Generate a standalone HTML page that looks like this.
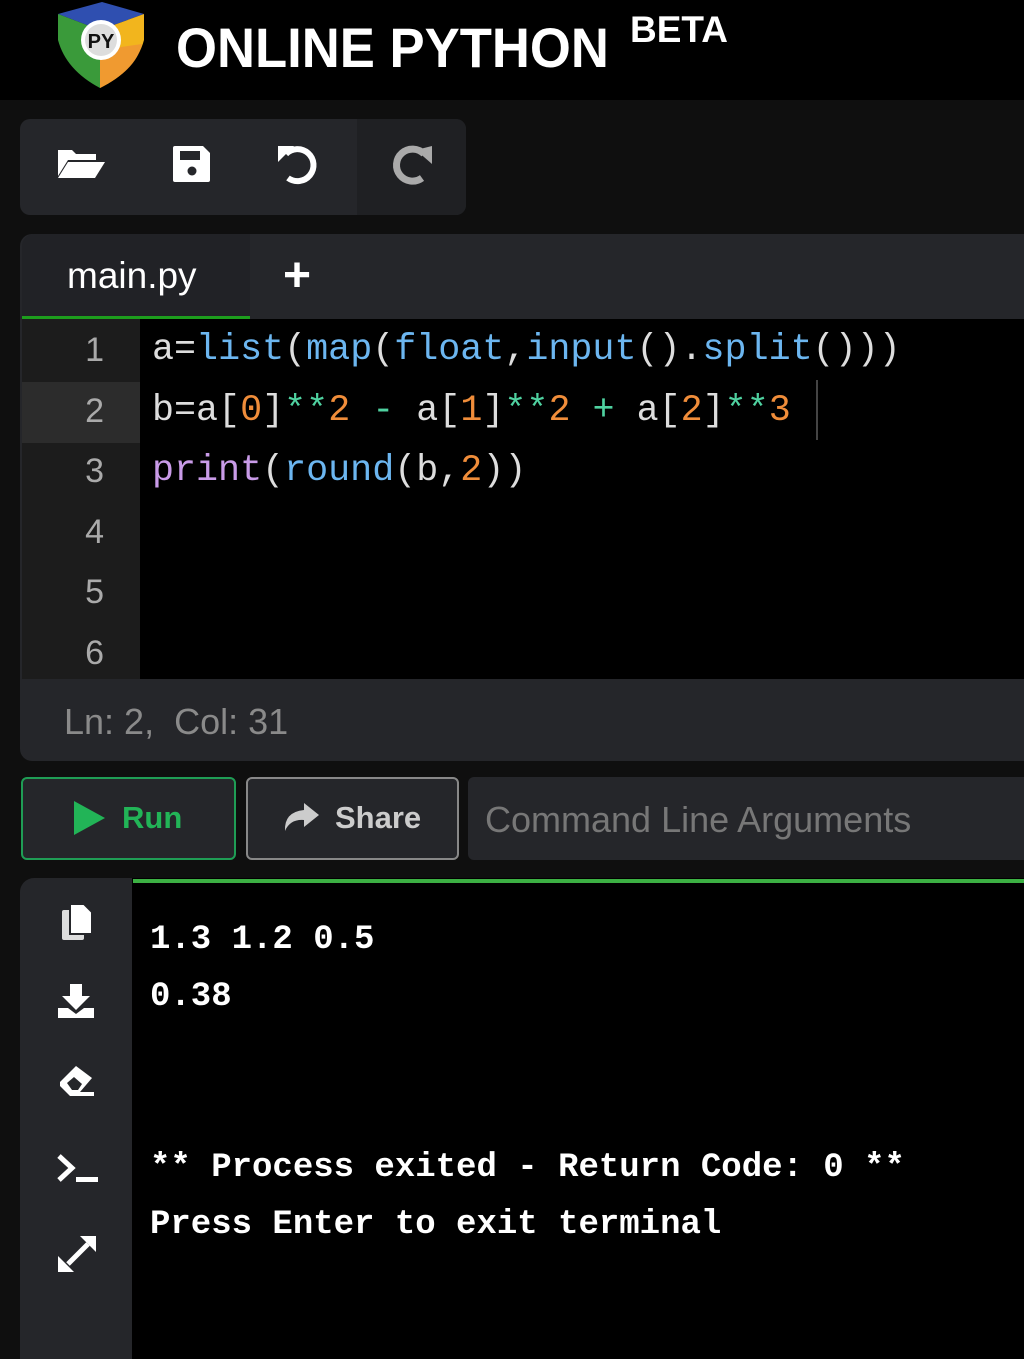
<!DOCTYPE html>
<html><head><meta charset="utf-8"><style>
*{margin:0;padding:0;box-sizing:border-box}
body{width:1024px;height:1359px;background:#0f0f0f;position:relative;overflow:hidden;font-family:"Liberation Sans",sans-serif;color:#fff}
.abs{position:absolute}
.mono{font-family:"Liberation Mono","DejaVu Sans Mono",monospace}
</style></head><body>
<div class="abs" style="left:0;top:0;width:1024px;height:100px;background:#000"></div>
<svg class="abs" style="left:54px;top:0" width="96" height="92" viewBox="0 0 96 92">
<path d="M48 2 L90 14 L46 30 L4 14 Z" fill="#2f4fb0"/>
<path d="M4 14 L46 30 L46 88 Q12 70 4 40 Z" fill="#3a9a3a"/>
<path d="M90 14 L46 30 L46 88 Q82 70 90 40 Z" fill="#f2b51d"/>
<path d="M46 50 L46 88 Q82 70 88 44 Z" fill="#f09a30"/>
<circle cx="47" cy="40" r="20" fill="#fff"/>
<circle cx="47" cy="40" r="16" fill="#ddd"/>
<text x="47" y="48" font-family="Liberation Sans" font-weight="bold" font-size="20" text-anchor="middle" fill="#111">PY</text>
</svg>
<div class="abs" style="left:176px;top:18px;font-size:56px;font-weight:bold;transform:scaleX(0.94);transform-origin:left;line-height:60px">ONLINE PYTHON</div>
<div class="abs" style="left:630px;top:8px;font-size:37px;font-weight:bold;line-height:44px">BETA</div>

<div class="abs" style="left:20px;top:119px;width:446px;height:96px;background:#25262a;border-radius:10px;overflow:hidden">
<div class="abs" style="left:337px;top:0;width:109px;height:96px;background:#1f2023"></div>
</div>
<svg class="abs" style="left:56px;top:146px" width="50" height="34" viewBox="0 0 50 34"><path d="M2 4 h14 l4 4 h20 v6 H12 L2 30 Z" fill="#fff"/><path d="M12 16 H49 L39 32 H2 Z" fill="#fff"/></svg>
<svg class="abs" style="left:172px;top:145px" width="40" height="38" viewBox="0 0 40 38"><path d="M3 1 h28 l7 7 v27 a2 2 0 0 1 -2 2 H3 a2 2 0 0 1 -2 -2 V3 a2 2 0 0 1 2 -2z" fill="#fff"/><rect x="8" y="6" width="20" height="9" fill="#25262a"/><circle cx="20" cy="26" r="4.5" fill="#25262a"/></svg>
<svg class="abs" style="left:276px;top:142px" width="46" height="44" viewBox="0 0 46 44"><path d="M10 12 A16 16 0 1 1 12 36" fill="none" stroke="#fff" stroke-width="6"/><path d="M2 4 L18 4 L2 20 Z" fill="#fff"/></svg>
<svg class="abs" style="left:388px;top:142px" width="46" height="44" viewBox="0 0 46 44"><path d="M36 12 A16 16 0 1 0 34 36" fill="none" stroke="#aaa" stroke-width="7"/><path d="M44 4 L44 22 L28 8 Z" fill="#aaa"/></svg>

<div class="abs" style="left:20px;top:234px;width:1010px;height:527px;background:#25262a;border-radius:12px 0 0 12px"></div>
<div class="abs" style="left:22px;top:234px;width:228px;height:84px;background:#212226;border-radius:12px 0 0 0"></div>
<div class="abs" style="left:67px;top:254px;font-family:'Liberation Sans';font-size:37px;line-height:44px">main.py</div>
<div class="abs" style="left:283px;top:248px;font-size:48px;font-weight:bold;line-height:56px">+</div>
<div class="abs" style="left:22px;top:316px;width:228px;height:3px;background:#1d9e1d"></div>
<div class="abs" style="left:22px;top:319px;width:1002px;height:360px;background:#000"></div>
<div class="abs" style="left:22px;top:319px;width:118px;height:360px;background:#1c1c1c"></div>
<div class="abs" style="left:22px;top:382px;width:118px;height:61px;background:#2c2c2c"></div>
<div class="abs" style="left:816px;top:380px;width:2px;height:60px;background:#444"></div>
<div class="abs" style="left:22px;top:320px;width:82px;text-align:right;font-size:34px;line-height:60.5px;color:#aaa">1<br>2<br>3<br>4<br>5<br>6</div>
<div class="abs mono" style="left:152px;top:320px;font-size:36.7px;line-height:60.5px;white-space:pre;color:#ddd">a=<span style="color:#6cb6f0">list</span>(<span style="color:#6cb6f0">map</span>(<span style="color:#6cb6f0">float</span>,<span style="color:#6cb6f0">input</span>().<span style="color:#6cb6f0">split</span>()))
b=a[<span style="color:#f08d3a">0</span>]<span style="color:#4fd1a0">**</span><span style="color:#f08d3a">2</span> <span style="color:#4fd1a0">-</span> a[<span style="color:#f08d3a">1</span>]<span style="color:#4fd1a0">**</span><span style="color:#f08d3a">2</span> <span style="color:#4fd1a0">+</span> a[<span style="color:#f08d3a">2</span>]<span style="color:#4fd1a0">**</span><span style="color:#f08d3a">3</span>
<span style="color:#c99be8">print</span>(<span style="color:#6cb6f0">round</span>(b,<span style="color:#f08d3a">2</span>))</div>
<div class="abs" style="left:64px;top:700px;font-size:36px;line-height:44px;color:#8a8a8a">Ln: 2,&nbsp; Col: 31</div>

<div class="abs" style="left:21px;top:777px;width:215px;height:83px;border:2px solid #1f9d55;border-radius:6px;background:#25262a"></div>
<svg class="abs" style="left:72px;top:800px" width="34" height="36" viewBox="0 0 34 36"><path d="M2 1 L33 18 L2 35 Z" fill="#22b457"/></svg>
<div class="abs" style="left:122px;top:796px;font-size:31px;font-weight:bold;color:#22b457;line-height:44px">Run</div>
<div class="abs" style="left:246px;top:777px;width:213px;height:83px;border:2px solid #888;border-radius:6px;background:#25262a"></div>
<svg class="abs" style="left:282px;top:802px" width="38" height="30" viewBox="0 0 38 30"><path d="M22 1 L37 13 L22 25 V18 Q8 17 3 29 Q2 10 22 8 Z" fill="#ccc"/></svg>
<div class="abs" style="left:335px;top:796px;font-size:31px;font-weight:bold;color:#ccc;line-height:44px">Share</div>
<div class="abs" style="left:468px;top:777px;width:560px;height:83px;background:#25262a;border-radius:6px 0 0 6px"></div>
<div class="abs" style="left:485px;top:798px;font-size:36px;color:#777;line-height:44px">Command Line Arguments</div>

<div class="abs" style="left:20px;top:878px;width:112px;height:481px;background:#25262a;border-radius:14px 0 0 0"></div>
<div class="abs" style="left:132px;top:878px;width:892px;height:481px;background:#000"></div>
<div class="abs" style="left:133px;top:879px;width:891px;height:4px;background:#3cb043"></div>
<svg class="abs" style="left:60px;top:902px" width="36" height="40" viewBox="0 0 36 40"><rect x="2" y="8" width="22" height="30" rx="2" fill="#ddd"/><path d="M10 2 h14 l8 8 v22 H10 Z" fill="#fff" stroke="#25262a" stroke-width="2"/></svg>
<svg class="abs" style="left:56px;top:982px" width="40" height="38" viewBox="0 0 40 38"><path d="M14 2 h12 v12 h8 L20 28 L6 14 h8 Z" fill="#fff"/><path d="M2 26 h10 l8 6 l8 -6 h10 v10 H2 Z" fill="#fff"/></svg>
<svg class="abs" style="left:56px;top:1064px" width="40" height="34" viewBox="0 0 40 34"><path d="M4 18 L20 2 L36 14 L24 28 H38 V32 H14 L4 22 Z" fill="#fff"/><path d="M11 19 L18 13 L26 20 L22 26 H16 Z" fill="#25262a"/></svg>
<svg class="abs" style="left:56px;top:1152px" width="48" height="36" viewBox="0 0 48 36"><path d="M3 4 L16 16 L3 28" fill="none" stroke="#fff" stroke-width="5"/><rect x="20" y="25" width="22" height="5" fill="#fff"/></svg>
<svg class="abs" style="left:56px;top:1232px" width="44" height="44" viewBox="0 0 44 44"><path d="M12 32 L32 12" stroke="#fff" stroke-width="5"/><path d="M24 4 H40 V20 Z" fill="#fff"/><path d="M2 24 V40 H18 Z" fill="#fff"/></svg>

<div class="abs mono" style="left:150px;top:912px;font-size:34px;line-height:57px;white-space:pre;color:#fff;font-weight:bold">1.3 1.2 0.5
0.38


** Process exited - Return Code: 0 **
Press Enter to exit terminal</div>
</body></html>
